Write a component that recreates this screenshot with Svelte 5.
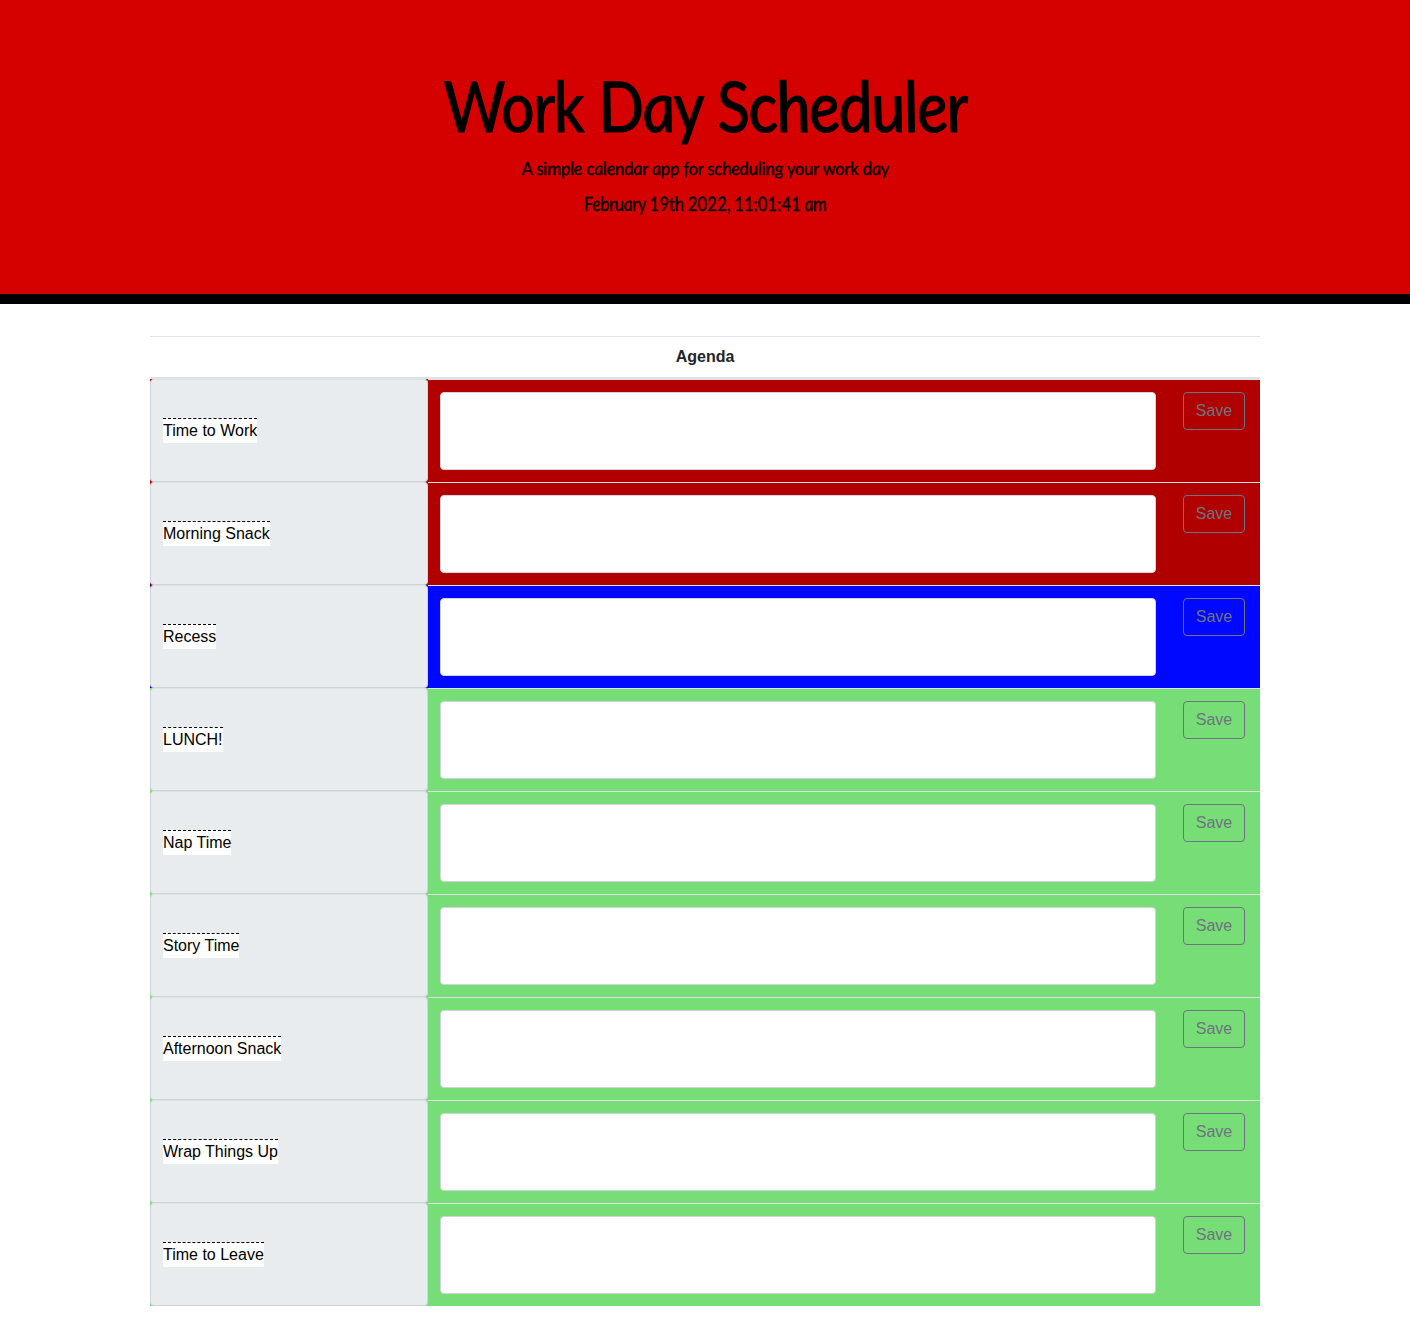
<script>
  const blocks = [
    { label: 'Time to Work', state: 'past' },
    { label: 'Morning Snack', state: 'past' },
    { label: 'Recess', state: 'present' },
    { label: 'LUNCH!', state: 'future' },
    { label: 'Nap Time', state: 'future' },
    { label: 'Story Time', state: 'future' },
    { label: 'Afternoon Snack', state: 'future' },
    { label: 'Wrap Things Up', state: 'future' },
    { label: 'Time to Leave', state: 'future' }
  ];
</script>

<header>
  <h1>Work Day Scheduler</h1>
  <p class="lead">A simple calendar app for scheduling your work day</p>
  <p class="date">February 19th 2022, 11:01:41 am</p>
</header>

<main>
  <div class="heading">Agenda</div>
  {#each blocks as block}
    <div class="row {block.state}">
      <div class="label"><span>{block.label}</span></div>
      <div class="entry">
        <textarea aria-label={block.label}></textarea>
        <button type="button">Save</button>
      </div>
    </div>
  {/each}
</main>

<style>
  :global(body) {
    background: #fff;
    font-family: 'Liberation Sans', Arial, sans-serif;
    font-size: 16px;
    line-height: 24px;
    color: #212529;
  }
  header {
    box-sizing: border-box;
    height: 304px;
    padding-top: 62px;
    background: #d50000;
    border-bottom: 10px solid #000;
    color: #000;
    text-align: center;
    font-family: Lato, sans-serif;
    font-style: italic;
    white-space: nowrap;
  }
  h1 {
    margin: 0 0 8px;
    font-size: 70px;
    font-weight: 400;
    line-height: 86px;
    letter-spacing: -1.5px;
    word-spacing: 2px;
    -webkit-text-stroke: 1.2px #000;
    transform: scaleX(0.92) skewX(8deg);
  }
  p {
    margin: 0;
    font-weight: 400;
    -webkit-text-stroke: 0.3px #000;
  }
  .lead {
    font-size: 18px;
    line-height: 24px;
    letter-spacing: -0.35px;
    word-spacing: 0.5px;
    transform: skewX(7deg);
  }
  .date {
    margin-top: 10px;
    font-size: 20px;
    line-height: 26px;
    letter-spacing: -0.5px;
    transform: scaleX(0.885) skewX(7deg);
  }
  main {
    box-sizing: border-box;
    width: 1110px;
    margin: 32px auto 16px;
  }
  .heading {
    box-sizing: border-box;
    height: 43px;
    padding-top: 8px;
    border-top: 1px solid #dee2e6;
    border-bottom: 2px solid #dee2e6;
    text-align: center;
    font-weight: 700;
  }
  .row {
    display: flex;
    height: 103px;
  }
  .past { background: #b00000; }
  .present { background: #0008ff; }
  .future { background: #77dd77; }
  .label {
    box-sizing: border-box;
    display: flex;
    align-items: center;
    width: 278px;
    height: 103px;
    padding: 0 12px;
    border: 1px solid #ced4da;
    border-top-color: #dee2e6;
    border-radius: 4px;
    background: #e9ecef;
    color: #000;
  }
  .label span {
    box-sizing: border-box;
    height: 25px;
    border-top: 1px dashed #000;
    background: #fff;
    white-space: nowrap;
  }
  .entry {
    display: flex;
    flex: 1;
    align-items: flex-start;
    border-top: 1px solid #dee2e6;
  }
  textarea {
    box-sizing: border-box;
    width: 716px;
    height: 78px;
    margin: 12px 27px 0 12px;
    padding: 6px 12px;
    border: 1px solid #ced4da;
    border-radius: 4px;
    background: #fff;
    font: inherit;
    resize: none;
  }
  button {
    box-sizing: border-box;
    width: 62px;
    height: 38px;
    margin: 12px 0 0;
    padding: 0;
    border: 1px solid #6c757d;
    border-radius: 4px;
    background: transparent;
    color: #6c757d;
    font: inherit;
  }
</style>
